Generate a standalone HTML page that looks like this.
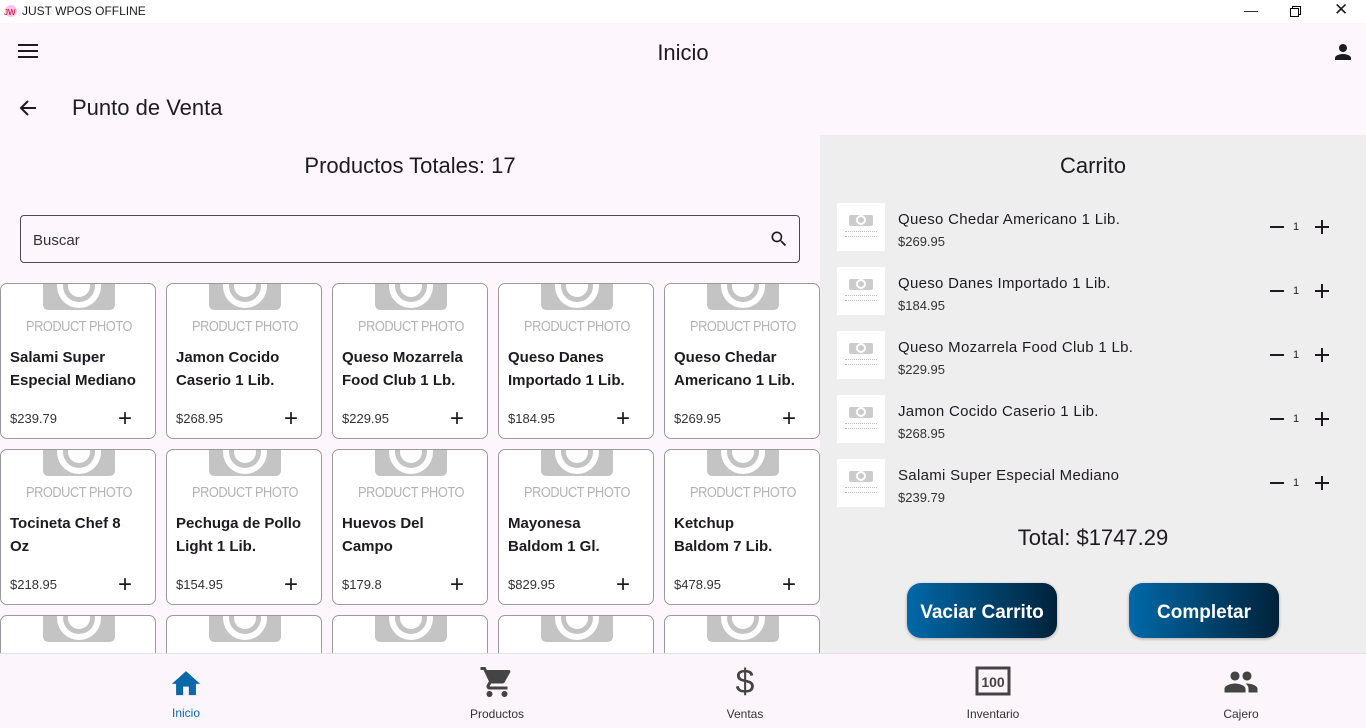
<!DOCTYPE html>
<html><head><meta charset="utf-8"><style>
*{margin:0;padding:0;box-sizing:border-box}
html,body{width:1366px;height:728px;overflow:hidden}
body{background:#fdf7fd;font-family:"Segoe UI","Liberation Sans",sans-serif;color:#1d1b20;position:relative}
.abs{position:absolute}
.title{top:0;left:0;width:1366px;height:23px;background:#fff;font-size:12px}
.card{position:absolute;width:156px;height:156px;border:1px solid #9c9aa0;border-radius:7px;background:#fff;overflow:hidden}
.card .ph{position:absolute;left:0;top:34px;width:156px;text-align:center;font-size:15px;color:#b3b3b3;letter-spacing:-0.5px;transform:scaleX(.85)}
.card .nm{position:absolute;left:9px;top:62px;font-weight:bold;font-size:15px;line-height:23px;width:145px}
.card .pr{position:absolute;left:9px;top:127px;font-size:13px;color:#333}
.card .pl{position:absolute;left:117px;top:121px;font-size:24px;font-weight:300}
.cart{left:820px;top:135px;width:546px;height:518px;background:#eeeeee}
.ci{position:absolute;left:17px;width:510px;height:48px}
.ci .im{position:absolute;left:0;top:0;width:48px;height:48px;background:#fff}
.ci .n{position:absolute;left:61px;top:8px;font-size:15px;letter-spacing:.3px}
.ci .p{position:absolute;left:61px;top:31px;font-size:13px;color:#333}
.ci .q{position:absolute;left:432px;top:14px;height:20px;width:70px}
.btn{position:absolute;top:583px;width:150px;height:55px;border-radius:14px;background:linear-gradient(90deg,#0069a8,#00223a);color:#fff;font-weight:bold;font-size:19px;text-align:center;line-height:59px;box-shadow:0 1px 3px rgba(0,0,0,.3)}
.nav{left:0;top:653px;width:1366px;height:75px;background:#fcf5fc;border-top:1px solid #e4e0e6}
.nav .it{position:absolute;top:0;width:120px;text-align:center;font-size:12px;color:#333}
.nav .lb{position:absolute;left:0;width:120px;top:52px}
</style></head><body>
<div class="abs title"><svg class="abs" style="left:3px;top:4px" width="16" height="14"><circle cx="8" cy="7" r="6" fill="#f3d" opacity=".3"/><text x="1" y="11" font-size="8" fill="#c00">JW</text></svg><span class="abs" style="left:22px;top:4px">JUST WPOS OFFLINE</span>
<span class="abs" style="left:1244px;top:2px;font-size:14px">&#8212;</span>
<svg class="abs" style="left:1290px;top:6px" width="11" height="11"><rect x="0.5" y="2.5" width="8" height="8" fill="none" stroke="#000"/><path d="M2.5 2.5V0.5h8v8h-2" fill="none" stroke="#000"/></svg>
<span class="abs" style="left:1334px;top:0px;font-size:17px">&#x2715;</span></div>
<svg class="abs" style="left:18px;top:43px" width="20" height="16"><path d="M0 2h20M0 8h20M0 14h20" stroke="#1d1b20" stroke-width="2"/></svg>
<div class="abs" style="left:0;width:1366px;top:40px;text-align:center;font-size:22px">Inicio</div>
<svg class="abs" style="left:1331px;top:40px" width="24" height="24" viewBox="0 0 24 24"><path fill="#1d1b20" d="M12 12c2.2 0 4-1.8 4-4s-1.8-4-4-4-4 1.8-4 4 1.8 4 4 4zm0 2c-2.7 0-8 1.3-8 4v2h16v-2c0-2.7-5.3-4-8-4z"/></svg>
<svg class="abs" style="left:19px;top:99px" width="18" height="18" viewBox="0 0 18 18"><path d="M17 9H2M9 2L2 9l7 7" stroke="#1d1b20" stroke-width="2" fill="none"/></svg>
<div class="abs" style="left:72px;top:95px;font-size:22px">Punto de Venta</div>
<div class="abs" style="left:0;width:820px;top:153px;text-align:center;font-size:22px">Productos Totales: 17</div>
<div class="abs" style="left:20px;top:215px;width:780px;height:48px;border:1px solid #4a4850;border-radius:4px"><span class="abs" style="left:12px;top:16px;font-size:15px;color:#333">Buscar</span>
<svg class="abs" style="left:748px;top:13px" width="20" height="20" viewBox="0 0 24 24"><path fill="#1d1b20" d="M15.5 14h-.8l-.3-.3A6.5 6.5 0 1 0 9.5 16a6.5 6.5 0 0 0 4.2-1.6l.3.3v.8l5 5 1.5-1.5-5-5zm-6 0a4.5 4.5 0 1 1 0-9 4.5 4.5 0 0 1 0 9z"/></svg></div>
<div class="abs" style="left:0;top:270px;width:820px;height:383px;overflow:hidden" id="g">
</div>
<div class="abs cart">
<div class="abs" style="left:0;width:546px;top:18px;text-align:center;font-size:22px">Carrito</div>
</div>
<div class="abs" style="left:820px;width:546px;top:525px;text-align:center;font-size:22px">Total: $1747.29</div>
<div class="btn" style="left:907px">Vaciar Carrito</div>
<div class="btn" style="left:1129px">Completar</div>
<div class="abs nav">
<div class="it" style="left:126px;color:#0868a8"><svg style="margin-top:12px" width="34" height="30" viewBox="0 0 24 20"><path fill="#0868a8" d="M10 20v-6h4v6h5v-8h3L12 3 2 12h3v8z"/></svg><div class="lb">Inicio</div></div>
<div class="it" style="left:437px"><svg style="margin-top:10px" width="36" height="36" viewBox="0 0 24 24"><path fill="#444" d="M7 18c-1.1 0-2 .9-2 2s.9 2 2 2 2-.9 2-2-.9-2-2-2zM1 2v2h2l3.6 7.6-1.4 2.4c-.1.3-.2.6-.2 1 0 1.1.9 2 2 2h12v-2H7.4c-.1 0-.2-.1-.2-.2v-.1l.9-1.7h7.4c.8 0 1.4-.4 1.7-1l3.6-6.5c.1-.2.1-.3.1-.5 0-.6-.4-1-1-1H5.2l-.9-2H1zm16 16c-1.1 0-2 .9-2 2s.9 2 2 2 2-.9 2-2-.9-2-2-2z"/></svg><div class="lb" style="top:53px">Productos</div></div>
<div class="it" style="left:685px"><div style="margin-top:8px;font-size:34px;line-height:40px;color:#444">$</div><div class="lb" style="top:53px">Ventas</div></div>
<div class="it" style="left:933px"><svg style="margin-top:12px" width="36" height="30" viewBox="0 0 36 30"><rect x="2" y="2" width="32" height="26" fill="none" stroke="#444" stroke-width="3"/><text x="18" y="21" text-anchor="middle" font-size="14" font-weight="bold" fill="#444" font-family="Liberation Sans">100</text></svg><div class="lb" style="top:53px">Inventario</div></div>
<div class="it" style="left:1181px"><svg style="margin-top:10px" width="40" height="36" viewBox="0 0 24 24"><path fill="#444" d="M16 11c1.7 0 3-1.3 3-3s-1.3-3-3-3-3 1.3-3 3 1.3 3 3 3zm-8 0c1.7 0 3-1.3 3-3S9.7 5 8 5 5 6.3 5 8s1.3 3 3 3zm0 2c-2.3 0-7 1.2-7 3.5V19h14v-2.5c0-2.3-4.7-3.5-7-3.5zm8 0h-1c1.2.8 2 2 2 3.5V19h6v-2.5c0-2.3-4.7-3.5-7-3.5z"/></svg><div class="lb" style="top:53px">Cajero</div></div>
</div>
<script>
var P=[["Salami Super<br>Especial Mediano","$239.79"],["Jamon Cocido<br>Caserio 1 Lib.","$268.95"],["Queso Mozarrela<br>Food Club 1 Lb.","$229.95"],["Queso Danes<br>Importado 1 Lib.","$184.95"],["Queso Chedar<br>Americano 1 Lib.","$269.95"],["Tocineta Chef 8<br>Oz","$218.95"],["Pechuga de Pollo<br>Light 1 Lib.","$154.95"],["Huevos Del<br>Campo","$179.8"],["Mayonesa<br>Baldom 1 Gl.","$829.95"],["Ketchup<br>Baldom 7 Lib.","$478.95"],["","",],["",""],["",""],["",""],["",""]];
var cam='<svg class="abs" style="left:42px;top:0" width="72" height="28"><path d="M0 0h72v20q0 6-6 6H6q-6 0-6-6z" fill="#c4c4c4"/><circle cx="36" cy="2" r="22" fill="#fff"/><circle cx="36" cy="2" r="16" fill="#c4c4c4"/><circle cx="36" cy="2" r="11" fill="#fff"/></svg>';
var h='';P.forEach(function(p,i){var c=i%5,r=Math.floor(i/5);h+='<div class="card" style="left:'+(c*166)+'px;top:'+(13+r*166)+'px">'+cam+'<div class="ph">PRODUCT PHOTO</div>'+(p[0]?'<div class="nm">'+p[0]+'</div><div class="pr">'+p[1]+'</div><div class="pl">+</div>':'')+'</div>';});
document.getElementById('g').innerHTML=h;
var C=[["Queso Chedar Americano 1 Lib.","$269.95"],["Queso Danes Importado 1 Lib.","$184.95"],["Queso Mozarrela Food Club 1 Lb.","$229.95"],["Jamon Cocido Caserio 1 Lib.","$268.95"],["Salami Super Especial Mediano","$239.79"]];
var ch='';C.forEach(function(c,i){ch+='<div class="ci" style="top:'+(68+i*64)+'px"><div class="im"><svg class="abs" style="left:12px;top:10px" width="24" height="14"><rect x="0" y="2" width="24" height="11" rx="2" fill="#ccc"/><circle cx="12" cy="7" r="5" fill="#fff"/><circle cx="12" cy="7" r="3" fill="#ccc"/></svg><div class="abs" style="left:8px;top:28px;width:32px;height:6px;border-top:1px dotted #bbb;border-bottom:1px dotted #bbb"></div></div><div class="n">'+c[0]+'</div><div class="p">'+c[1]+'</div><div class="q"><svg class="abs" style="left:0;top:2px" width="16" height="16"><path d="M1 8h14" stroke="#1d1b20" stroke-width="2"/></svg><span class="abs" style="left:24px;top:4px;font-size:11px">1</span><svg class="abs" style="left:45px;top:2px" width="16" height="16"><path d="M1 8h14M8 1v14" stroke="#1d1b20" stroke-width="2"/></svg></div></div>';});
document.querySelector('.cart').insertAdjacentHTML('beforeend',ch);
</script>
</body></html>
